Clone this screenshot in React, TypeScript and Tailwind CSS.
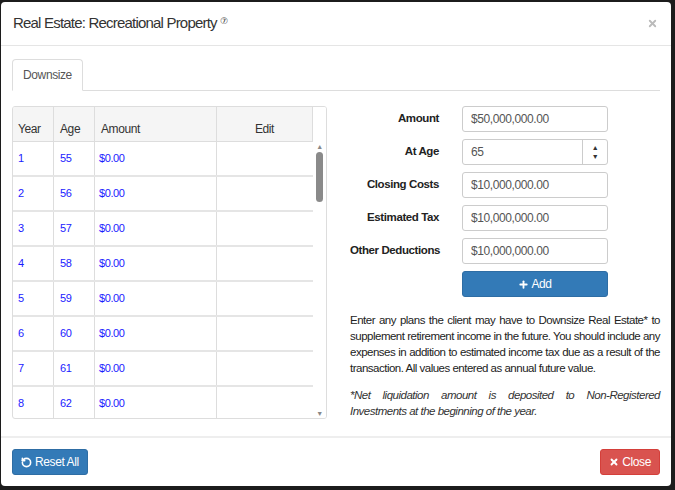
import { RotateCcw, X, Plus } from "lucide-react";

const rows = [1, 2, 3, 4, 5, 6, 7, 8];

const fields = [
  { label: "Amount", value: "$50,000,000.00" },
  { label: "At Age", value: "65", spin: true },
  { label: "Closing Costs", value: "$10,000,000.00" },
  { label: "Estimated Tax", value: "$10,000,000.00" },
  { label: "Other Deductions", value: "$10,000,000.00" },
];

export default function App() {
  return (
    <div
      className="w-[675px] h-[490px] bg-[#1c1c1c] pt-[2px] pl-[1px] overflow-hidden tracking-[-0.4px]"
      style={{ fontFamily: '"Liberation Sans", Arial, sans-serif' }}
    >
      <div className="w-[670px] h-[484px] bg-white rounded-[4px] flex flex-col text-[#333]">
        <div className="h-[44px] border-b border-[#e5e5e5] flex items-center justify-between pl-[12px] pr-[13px]">
          <div className="text-[15px] text-[#333] tracking-[-0.8px]">
            Real Estate: Recreational Property
            <sup className="ml-[3px] text-[9px]">⑦</sup>
          </div>
          <X className="w-[11px] h-[11px] text-[#bbb]" strokeWidth={4} />
        </div>

        <div className="px-[11px] pt-[13px] flex-1 overflow-hidden">
          <div className="flex border-b border-[#ddd] h-[32px]">
            <div className="w-[71px] h-[32px] border border-[#ddd] border-b-white rounded-t-[4px] bg-white flex items-center justify-center text-[12px] text-[#555] -mb-px">
              Downsize
            </div>
          </div>

          <div className="flex mt-[15px]">
            <div className="w-[315px] h-[313px] border border-[#ddd] rounded-[3px] flex overflow-hidden">
              <div className="flex-1 text-[12px] overflow-hidden">
                <div className="flex h-[35px] bg-[#f5f5f5] border-b border-[#ddd] text-[#333]">
                  <div className="w-[41px] pl-[5px] border-r border-[#ddd] flex items-end pb-[3px]">Year</div>
                  <div className="w-[41px] pl-[6px] border-r border-[#ddd] flex items-end pb-[3px]">Age</div>
                  <div className="w-[122px] pl-[6px] border-r border-[#ddd] flex items-end pb-[3px]">Amount</div>
                  <div className="flex-1 border-r border-[#ddd] flex items-end justify-center pb-[3px]">Edit</div>
                </div>
                {rows.map((r) => (
                  <div key={r} className="flex h-[35px] border-b-2 border-[#e5e5e5] text-[#1a1aff] text-[11px]">
                    <div className="w-[41px] pl-[5px] border-r border-[#ddd] flex items-center">{r}</div>
                    <div className="w-[41px] pl-[6px] border-r border-[#ddd] flex items-center">{r + 54}</div>
                    <div className="w-[122px] pl-[4px] border-r border-[#ddd] flex items-center">$0.00</div>
                    <div className="flex-1" />
                  </div>
                ))}
              </div>
              <div className="w-[13px] flex flex-col items-center pt-[36px] bg-white">
                <div className="text-[7px] text-[#888] leading-none">▲</div>
                <div className="w-[7px] h-[50px] bg-[#8a8a8a] rounded-full mt-[2px]" />
                <div className="flex-1" />
                <div className="text-[7px] text-[#888] leading-none mb-[1px]">▼</div>
              </div>
            </div>

            <div className="flex-1 pl-[23px]">
              <div className="flex flex-col gap-[7px]">
                {fields.map((f) => (
                  <div key={f.label} className="flex items-center">
                    <div className="w-[89px] whitespace-nowrap text-right text-[11.5px] font-bold text-[#222]">{f.label}</div>
                    <div className="ml-[23px] w-[146px] h-[26px] border border-[#ccc] rounded-[3px] flex items-center text-[12px] text-[#555]">
                      <span className="pl-[8px] flex-1">{f.value}</span>
                      {f.spin && (
                        <div className="w-[25px] h-full border-l border-[#ccc] flex flex-col items-center justify-center text-[7px] leading-[9px] text-[#333]">
                          <span>▲</span>
                          <span>▼</span>
                        </div>
                      )}
                    </div>
                  </div>
                ))}
                <div className="ml-[112px] w-[146px] h-[26px] bg-[#337ab7] border border-[#2e6da4] rounded-[3px] text-white text-[12px] flex items-center justify-center gap-[2px]">
                  <Plus className="w-[11px] h-[11px]" strokeWidth={4} />
                  Add
                </div>
              </div>
              <p className="mt-[15px] text-[11.5px] leading-[16px] text-[#222] text-justify tracking-[-0.5px]">
                Enter any plans the client may have to Downsize Real Estate* to supplement retirement income in the future. You should include any expenses in addition to estimated income tax due as a result of the transaction. All values entered as annual future value.
              </p>
              <p className="mt-[11px] text-[11.5px] leading-[16px] text-[#333] italic text-justify tracking-[-0.5px]">
                *Net liquidation amount is deposited to Non-Registered Investments at the beginning of the year.
              </p>
            </div>
          </div>
        </div>

        <div className="h-[50px] shrink-0 border-t-2 border-[#eee] flex items-center justify-between px-[11px]">
          <div className="h-[26px] px-[8px] bg-[#337ab7] border border-[#2e6da4] rounded-[3px] text-white text-[12px] flex items-center gap-[3px]">
            <RotateCcw className="w-[11px] h-[11px]" strokeWidth={3.5} />
            Reset All
          </div>
          <div className="h-[26px] px-[8px] bg-[#d9534f] border border-[#d43f3a] rounded-[3px] text-white text-[12px] flex items-center gap-[3px]">
            <X className="w-[10px] h-[10px]" strokeWidth={4.5} />
            Close
          </div>
        </div>
      </div>
    </div>
  );
}
